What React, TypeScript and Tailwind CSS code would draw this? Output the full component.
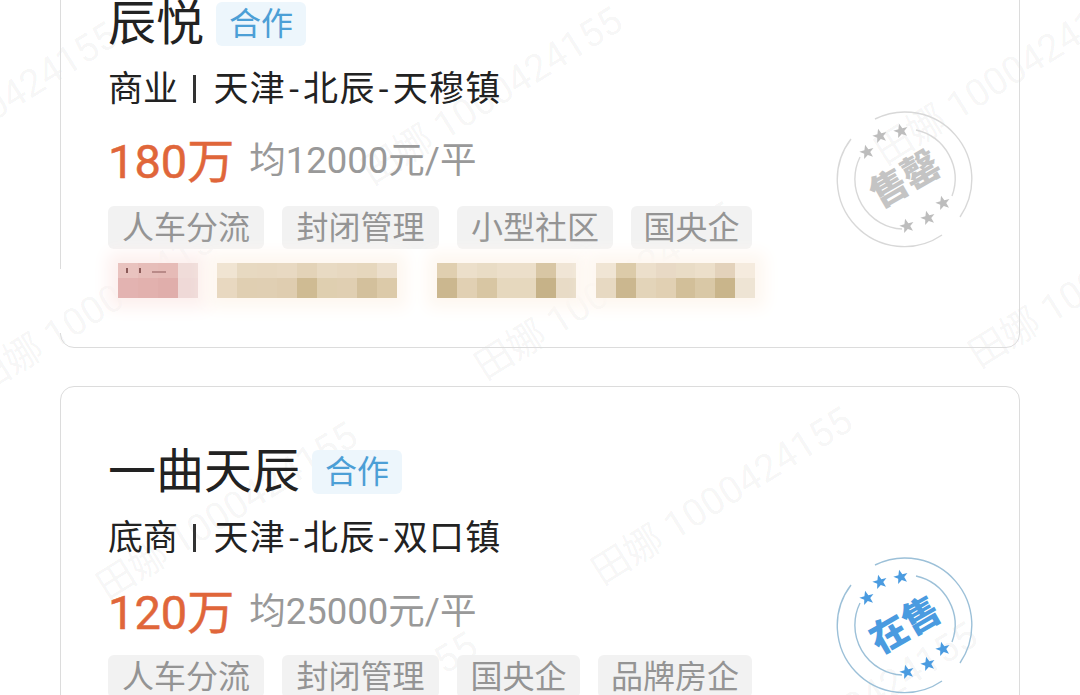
const fontCn = "font-['Roboto','Noto_Sans_CJK_SC',sans-serif]";

type Listing = {
  name: string;
  line: string;
  place: string[];
  price: string;
  avg: string;
  tags: { label: string; width: string }[];
  subClass: string;
  priceClass: string;
  tagsClass: string;
};

const listings: Listing[] = [
  {
    name: "辰悦",
    line: "商业",
    place: ["天津", "北辰", "天穆镇"],
    price: "180万",
    avg: "均12000元/平",
    subClass: "mt-[21px]",
    priceClass: "mt-[28px]",
    tagsClass: "mt-[21px]",
    tags: [
      { label: "人车分流", width: "w-[156px]" },
      { label: "封闭管理", width: "w-[157px]" },
      { label: "小型社区", width: "w-[156px]" },
      { label: "国央企", width: "w-[121px]" },
    ],
  },
  {
    name: "一曲天辰",
    line: "底商",
    place: ["天津", "北辰", "双口镇"],
    price: "120万",
    avg: "均25000元/平",
    subClass: "mt-[22px]",
    priceClass: "mt-[30px]",
    tagsClass: "mt-[19px]",
    tags: [
      { label: "人车分流", width: "w-[156px]" },
      { label: "封闭管理", width: "w-[157px]" },
      { label: "国央企", width: "w-[123px]" },
      { label: "品牌房企", width: "w-[154px]" },
    ],
  },
];

const watermarks = [
  "left-[-140px] top-[171px]",
  "left-[365px] top-[156px]",
  "left-[878px] top-[136px]",
  "left-[-25px] top-[365px]",
  "left-[478px] top-[351px]",
  "left-[972px] top-[339px]",
  "left-[100px] top-[571px]",
  "left-[595px] top-[556px]",
  "left-[220px] top-[781px]",
  "left-[720px] top-[771px]",
];

// mosaic cells for the blurred tags, top row then bottom row
const mosaic = [
  {
    box: "w-[80px] ml-[11px] bg-[#f6e4e0] shadow-[0_0_16px_10px_#fdf0ee]",
    top: ["#e9c3bf", "#e6bdb9", "#e6bbb7", "#f0dcd9"],
    bottom: ["#e3b3b1", "#e2b1ae", "#e0aeab", "#efd9d7"],
  },
  {
    box: "w-[180px] ml-[19px] bg-[#f7eee0] shadow-[0_0_16px_10px_#fef7f0]",
    top: ["#f0e4d2", "#e7d9c1", "#e7d8c0", "#e8d9c2", "#e3d3b8", "#e8dac3", "#e7d8c0", "#e6d7bd", "#ecdfcc"],
    bottom: ["#e8d8c0", "#e0cfb2", "#e0cfb3", "#dfcdb0", "#cfbb93", "#dfcfb0", "#e0cfb2", "#d3c09c", "#dccaa9"],
  },
  {
    box: "w-[139px] ml-[40px] bg-[#f7eee0] shadow-[0_0_16px_10px_#fef7f0]",
    top: ["#e0cfb0", "#ecdfca", "#e9dcc5", "#ecdfca", "#ecdfca", "#d8c6a4", "#f0e5d5"],
    bottom: ["#cbb78f", "#e1d0b3", "#d8c6a3", "#e6d8be", "#e6d8be", "#c6b288", "#e8dbc6"],
  },
  {
    box: "w-[159px] ml-[20px] bg-[#f7eee0] shadow-[0_0_16px_10px_#fef7f0]",
    top: ["#f0e5d4", "#dccba9", "#ecdfcb", "#e8d9c5", "#e9dcc6", "#ecdfca", "#e3d2bb", "#f5ebde"],
    bottom: ["#e7d9c2", "#cbb78f", "#e3d4b9", "#e1d0b3", "#d2bf99", "#d9c8a6", "#c9b58b", "#eee4d4"],
  },
];

function Star({ x, y, fill }: { x: number; y: number; fill: string }) {
  return (
    <polygon
      transform={`translate(${x} ${y}) rotate(-15) scale(1.35)`}
      points="0,-5.5 1.5,-1.8 5.4,-1.7 2.3,0.7 3.4,4.5 0,2.3 -3.4,4.5 -2.3,0.7 -5.4,-1.7 -1.5,-1.8"
      fill={fill}
    />
  );
}

function Stamp({ label, color, star, line, className }: { label: string; color: string; star: string; line: string; className: string }) {
  return (
    <svg viewBox="-70 -70 140 140" className={`absolute right-[44px] w-[140px] h-[140px] ${className}`}>
      <g fill="none" stroke={line} strokeWidth="1.4">
        <path d="M-30 -60 A67 67 0 0 1 55 38" />
        <path d="M37 56 A67 67 0 0 1 -54 -40" />
        <path d="M11 -49 A50 50 0 0 1 47 17" />
        <path d="M-3 50 A50 50 0 0 1 -45 -22" />
      </g>
      <Star x={-38} y={-27} fill={star} />
      <Star x={-25} y={-43} fill={star} />
      <Star x={-4} y={-48} fill={star} />
      <Star x={38} y={24} fill={star} />
      <Star x={23} y={39} fill={star} />
      <Star x={2} y={47} fill={star} />
      <text
        x="0"
        y="13"
        transform="rotate(-30)"
        textAnchor="middle"
        fontFamily="'Noto Sans CJK SC', sans-serif"
        fontWeight="900"
        fontSize="37"
        fill={color}
      >
        {label}
      </text>
    </svg>
  );
}

function Card({ item, blurred, children }: { item: Listing; blurred?: boolean; children: React.ReactNode }) {
  return (
    <div className="relative border-[1.5px] border-[#dcdcdc] rounded-[14px] pl-[47px] pt-[61px] h-[410px] shrink-0">
      <div className="flex items-center h-[48px]">
        <span className="text-[48px] leading-[48px] text-[#222222]">{item.name}</span>
        <span className="ml-[12px] w-[90px] h-[44px] flex items-center justify-center rounded-[6px] bg-[#edf6fc] text-[32px] leading-none text-[#4c9fd6]">
          合作
        </span>
      </div>
      <div className={`flex items-center h-[40px] text-[35px] leading-none text-[#222222] ${item.subClass}`}>
        <span>{item.line}</span>
        <span className="ml-[15px] mr-[18px] w-[2.5px] h-[28px] bg-[#333333]" />
        <span className="tracking-[1.3px]">
          {item.place[0]}
          <span className="mx-[3px]">-</span>
          {item.place[1]}
          <span className="mx-[3px]">-</span>
          {item.place[2]}
        </span>
      </div>
      <div className={`flex items-center h-[48px] ${item.priceClass}`}>
        <span className="text-[47px] leading-none text-[#e0663a] [-webkit-text-stroke:0.5px_#e0663a]">{item.price}</span>
        <span className="ml-[15px] text-[36.5px] leading-none text-[#999999]">{item.avg}</span>
      </div>
      <div className={`flex gap-[18px] ${item.tagsClass}`}>
        {item.tags.map((tag) => (
          <span
            key={tag.label}
            className={`h-[43px] flex items-center justify-center rounded-[6px] bg-[#f2f2f2] text-[32px] leading-none text-[#949494] ${tag.width}`}
          >
            {tag.label}
          </span>
        ))}
      </div>
      {blurred && (
        <>
          {/* the blur in the screenshot also wipes out the card's left border */}
          <div className="absolute -left-[2px] top-[330px] w-[5px] h-[64px] bg-white" />
          <div className="flex mt-[14px] -ml-[1px] h-[35px]">
            {mosaic.map((block, i) => (
              <div key={i} className={`relative flex flex-col ${block.box}`}>
                <div className="flex h-[15px]">
                  {block.top.map((c, j) => (
                    <div key={j} className="flex-1" style={{ backgroundColor: c }} />
                  ))}
                </div>
                <div className="flex h-[20px]">
                  {block.bottom.map((c, j) => (
                    <div key={j} className="flex-1" style={{ backgroundColor: c }} />
                  ))}
                </div>
                {i === 0 && (
                  <div className="absolute left-[8px] top-[5px] flex gap-[11px]">
                    <div className="w-[2px] h-[5px] bg-[#8a5a58]" />
                    <div className="w-[2px] h-[5px] bg-[#8a5a58]" />
                    <div className="w-[14px] h-[2px] mt-[3px] bg-[#b98a88]" />
                  </div>
                )}
              </div>
            ))}
          </div>
        </>
      )}
      {children}
    </div>
  );
}

export default function App() {
  return (
    <div className={`relative w-[1080px] h-[695px] overflow-hidden bg-white ${fontCn}`}>
      {watermarks.map((pos) => (
        <span
          key={pos}
          className={`absolute rotate-[-32deg] origin-left whitespace-nowrap text-[38px] leading-none text-[#0000000d] pointer-events-none ${pos}`}
        >
          田娜 1000424155
        </span>
      ))}
      <div className="relative flex flex-col gap-[38px] -mt-[62px] ml-[60px] w-[960px]">
        <Card item={listings[0]} blurred>
          <Stamp label="售罄" color="#c4c4c4" star="#bdbdbd" line="#d8d8d8" className="top-[170px]" />
        </Card>
        <Card item={listings[1]}>
          <Stamp label="在售" color="#4a9be0" star="#4a9be0" line="#9cc0d8" className="top-[168px]" />
        </Card>
      </div>
    </div>
  );
}
